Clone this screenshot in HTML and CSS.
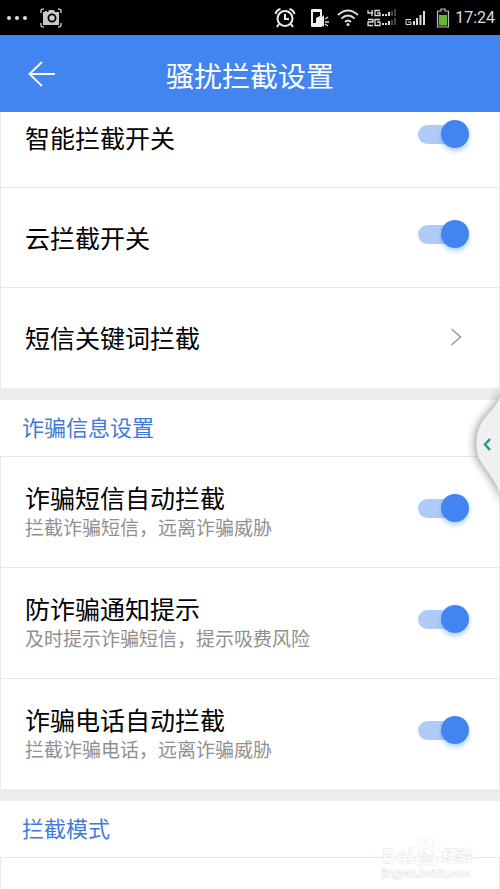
FILE: index.html
```html
<!DOCTYPE html>
<html lang="zh-CN">
<head>
<meta charset="utf-8">
<meta name="viewport" content="width=device-width, initial-scale=1">
<title>骚扰拦截设置</title>
<link rel="stylesheet" href="styles.css">
</head>
<body>
<div class="status">
  <svg width="22" height="20" viewBox="0 0 22 20" fill="#ddd" aria-hidden="true"><circle cx="3" cy="10" r="2"/><circle cx="11" cy="10" r="2"/><circle cx="19" cy="10" r="2"/></svg>
  <svg class="status-camera" width="22" height="20" viewBox="0 0 22 20" aria-hidden="true">
    <path d="M1 5V3q0-2 3-2M18 1q3 0 3 2v2M1 15v2q0 2 3 2M18 19q3 0 3-2v-2" fill="none" stroke="#bbb" stroke-width="1.5"/>
    <path d="M3 4h2V3h2v1h1l1-2h5l1 2h4v13H3z" fill="#c8c8c8"/><circle cx="12" cy="10" r="3.6" fill="#ccc" stroke="#000" stroke-width="1.8"/>
  </svg>
  <div class="status-right">
    <svg width="22" height="20" viewBox="0 0 22 20" fill="none" stroke="#eee" stroke-width="2" aria-hidden="true"><circle cx="11" cy="10.500" r="7.500"/><path d="M11 6v5h4M1.500 6q1-4 5-5M20.500 6q-1-4-5-5M5 16l-2 3M17 16l2 3"/></svg>
    <svg class="status-mute" width="19" height="20" viewBox="0 0 19 20" aria-hidden="true"><path d="M2 1h9q1 0 1 1v17H2q-1 0-1-1V2q0-1 1-1z" fill="#eee"/><path d="M3 4h7v4l-4 2v5H3z" fill="#000"/><path d="M7 11h3l4-4v12l-4-3H7z" fill="#eee"/><path d="M15 11l3-2M15 14h4M15 16l3 2" stroke="#ddd" stroke-width="1.500"/></svg>
    <svg class="status-wifi" width="22" height="18" viewBox="0 0 22 18" fill="none" stroke="#ddd" stroke-width="2" aria-hidden="true"><path d="M1 6q10-9 20 0M4.500 9.500q6.500-6 13 0M8 13q3-3 6 0"/><circle cx="11" cy="15.500" r="1.500" fill="#ddd" stroke="none"/></svg>
    <svg class="status-dual" width="30" height="18" viewBox="0 0 30 18" fill="none" stroke="#ddd" stroke-width="1.300" aria-hidden="true"><path d="M1 1v3h5M5 1v6M13 1.500H8v5h5V4h-3M1 10.500h5V13H1v3.500h5M13 10.500H8v6h5V13h-3"/><path d="M16 7V5M19 7V5M22 7V3M16 16v-2M19 16v-2M22 16v-4" stroke-width="2"/><path d="M25 7V2M28 7V0M25 16v-5M28 16V9" stroke="#444" stroke-width="2"/></svg>
    <svg class="status-signal" width="21" height="16" viewBox="0 0 21 16" fill="none" stroke="#ddd" aria-hidden="true"><path d="M6 9.500H1v5h5V12H3"/><path d="M9 15v-4M12 15V8M15.500 15V5M19 15V1" stroke-width="2"/></svg>
    <svg class="status-battery" width="14" height="20" viewBox="0 0 14 20" aria-hidden="true"><path d="M5 3V1h4v2h3.500v16h-11V3z" fill="#111" stroke="#bbb" stroke-width="1.200"/><path d="M3 7h8v10.500H3z" fill="#6bb536"/></svg>
    <span>17:24</span>
  </div>
</div>
<header class="header">
  <button class="back" type="button" aria-label="返回"><svg width="28" height="26" viewBox="0 0 28 26" fill="none" stroke="#fff" stroke-width="1.800" aria-hidden="true"><path d="M14 1L1.500 13 14 25M1.500 13H27"/></svg></button>
  <h1>骚扰拦截设置</h1>
</header>
<main class="content">
  <section class="group group-scrolled">
    <div class="row"><label for="smart">智能拦截开关</label><input class="switch" id="smart" type="checkbox" role="switch" checked></div>
    <div class="row"><label for="cloud">云拦截开关</label><input class="switch" id="cloud" type="checkbox" role="switch" checked></div>
    <a class="row" href="#keywords"><span>短信关键词拦截</span><svg class="chevron" width="12" height="18" viewBox="0 0 12 18" fill="none" stroke="#999" stroke-width="1.500" aria-hidden="true"><path d="M1.500 1l9 8-9 8"/></svg></a>
  </section>
  <section class="group">
    <h2>诈骗信息设置</h2>
    <div class="row row-tall"><label for="sms">诈骗短信自动拦截<small>拦截诈骗短信，远离诈骗威胁</small></label><input class="switch" id="sms" type="checkbox" role="switch" checked></div>
    <div class="row row-tall"><label for="notice">防诈骗通知提示<small>及时提示诈骗短信，提示吸费风险</small></label><input class="switch" id="notice" type="checkbox" role="switch" checked></div>
    <div class="row row-tall"><label for="call">诈骗电话自动拦截<small>拦截诈骗电话，远离诈骗威胁</small></label><input class="switch" id="call" type="checkbox" role="switch" checked></div>
  </section>
  <section class="group group-last">
    <h2>拦截模式</h2>
  </section>
</main>
<button class="handle" type="button" aria-label="展开侧栏">
  <svg width="34" height="130" viewBox="0 0 34 130" aria-hidden="true"><path class="handle-body" d="M36 10C32 25 25 30 19 37C13 45 10 53 10 64C10 74 13 80 18 87C25 97 32 105 36 122z"/><path d="M24 59l-5 5.500 5 5.500" fill="none" stroke="#10a483" stroke-width="2.500"/></svg>
</button>
<div class="watermark" aria-hidden="true">
  <div class="watermark-brand"><span>Bai</span><svg width="28" height="30" viewBox="0 0 28 30" fill="#fff" stroke="#dcdcdc"><ellipse cx="4" cy="13" rx="3" ry="4"/><ellipse cx="10" cy="5" rx="3" ry="4"/><ellipse cx="18" cy="5" rx="3" ry="4"/><ellipse cx="24" cy="12" rx="3" ry="4"/><path d="M14 12c5 0 6 6 10 9s1 8-4 7q-6-1-12 0c-5 1-8-4-4-7s5-9 10-9z"/><text x="7" y="25" font-size="12">du</text></svg><b>经验</b></div>
  <div class="watermark-url">jingyan.baidu.com</div>
</div>
</body>
</html>
```

FILE: styles.css
```css
* { box-sizing: border-box; }

body {
  margin: 0;
  min-height: 100vh;
  display: flex;
  flex-direction: column;
  position: relative;
  overflow-x: hidden;
  background: #ececec;
  color: #000;
  font-family: "Noto Sans CJK SC", sans-serif;
}

h1, h2 { margin: 0; font-weight: 400; }
button { padding: 0; border: 0; background: none; cursor: pointer; }
svg { display: block; flex: none; }

.status {
  height: 35px;
  padding: 0 5px 0 6px;
  display: flex;
  align-items: center;
  background: #000;
  color: #ddd;
  font-family: Roboto, sans-serif;
  font-size: 16px;
}
.status-camera { margin-left: 12px; }
.status-right { margin-left: auto; display: flex; align-items: center; }
.status-mute { margin-left: 14px; }
.status-wifi { margin-left: 8px; }
.status-dual { margin-left: 8px; }
.status-signal { margin-left: 8px; }
.status-battery { margin: 0 5px 0 10px; }

.header {
  height: 77px;
  padding: 0 28px;
  display: grid;
  grid-template-columns: 28px 1fr 28px;
  align-items: center;
  background: #4285f0;
  color: #fff;
}
.header h1 { font-size: 28px; line-height: 40px; text-align: center; padding-top: 2px; }

.content { flex: 1; display: flex; flex-direction: column; gap: 12px; overflow: hidden; }

.group { background: #fff; }
.group-scrolled { margin-top: -24px; }
.group-last { flex: 1; }
.group h2 {
  height: 56px;
  padding: 0 22px;
  color: #3f7bdc;
  font-size: 22px;
  line-height: 52px;
}

.row {
  height: 100px;
  padding: 0 30px 2px 24px;
  display: flex;
  align-items: center;
  justify-content: space-between;
  border: 1px solid #e8e8e8;
  border-width: 0 1px 1px;
  color: inherit;
  font-size: 25px;
  line-height: 32px;
  text-decoration: none;
}
.row:last-child { border-bottom: 0; }
.row-tall { height: 111px; border-width: 1px 1px 0; }
.row small { display: block; color: #909090; font-size: 19px; line-height: 28px; }
.group-last::after { content: ""; display: block; height: 32px; border: 1px solid #e8e8e8; border-bottom: 0; }
.chevron { margin-right: 7px; }

.switch {
  appearance: none;
  position: relative;
  flex: none;
  width: 52px;
  height: 28px;
  margin: 0 0 6px;
  cursor: pointer;
}
.switch::before {
  content: "";
  position: absolute;
  inset: 5px 8px 4px 1px;
  border-radius: 10px;
  background: #b0cbf7;
}
.switch::after {
  content: "";
  position: absolute;
  top: 0;
  right: 0;
  width: 28px;
  height: 28px;
  border-radius: 50%;
  background: #4285f0;
  box-shadow: 0 3px 5px #4285f066;
}
.switch:not(:checked)::before { background: #ccc; }
.switch:not(:checked)::after { right: 24px; background: #f5f5f5; }

.handle { position: absolute; right: 0; top: 380px; }
.handle-body { fill: #f0f0f0; stroke: #c8c8c8; filter: drop-shadow(-1px 0 4px #0006); }

.watermark {
  position: absolute;
  right: 28px;
  bottom: 10px;
  color: #fff;
  font-family: "Liberation Sans", "Noto Sans CJK SC", sans-serif;
  -webkit-text-stroke: 1px #e2e2e2;
  paint-order: stroke;
}
.watermark-brand { display: flex; align-items: flex-end; font-size: 21px; line-height: 22px; }
.watermark-brand b { font-size: 15px; margin-left: 2px; }
.watermark-url { font-size: 11px; line-height: 13px; }
```
